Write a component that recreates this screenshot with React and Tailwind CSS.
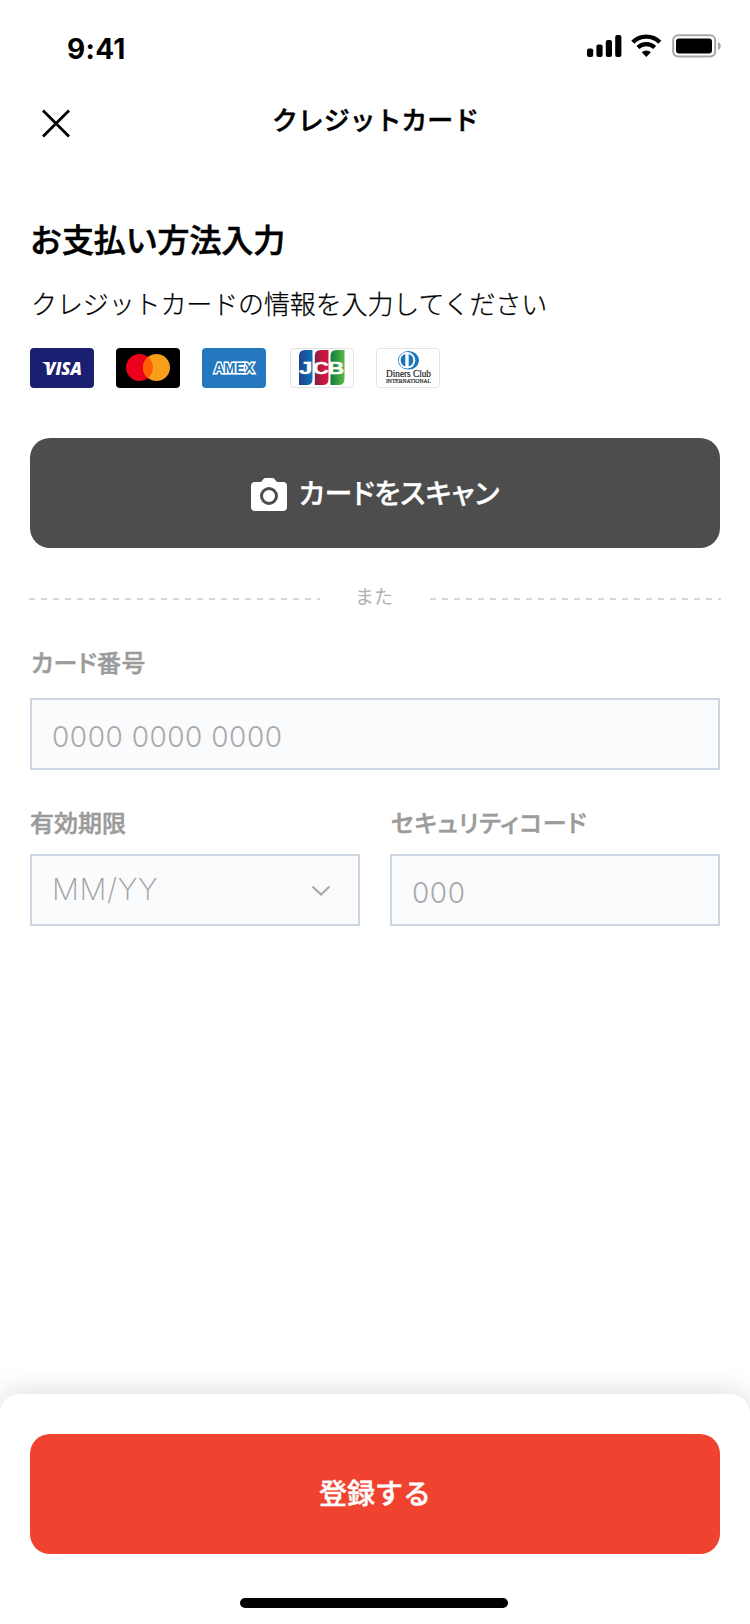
import { useState } from "react";

const labelClass =
  "text-[24px] leading-9 font-medium text-[#9b9b9b] [-webkit-text-stroke:0.5px] [font-feature-settings:'palt']";
const boxClass = "h-[72px] w-full border-2 border-[#cdd5e1] bg-[#fafbfd] flex items-center";
const inputClass =
  "w-full pt-[5px] bg-transparent outline-none font-['Inter',sans-serif] text-[28px] font-light tracking-[0.52px] text-[#a9a9a9] placeholder:text-[#a9a9a9] placeholder:opacity-100";

function StatusBar() {
  return (
    <div className="h-[88px] flex items-start justify-between pl-[67px] pr-[28px]">
      <span className="mt-[32px] font-['Inter',sans-serif] text-[28px] leading-[34px] font-bold tracking-[0.3px]">
        9:41
      </span>
      <div className="flex items-start pt-[34px]">
        <svg width="35" height="24" viewBox="0 0 35 24">
          <rect x="0" y="14.5" width="6.2" height="8.5" rx="2" />
          <rect x="9.4" y="10.5" width="6.2" height="12.5" rx="2" />
          <rect x="18.8" y="6" width="6.2" height="17" rx="2" />
          <rect x="28.2" y="1" width="6.2" height="22" rx="2" />
        </svg>
        <svg width="31" height="24" viewBox="0 0 31 24" fill="none" stroke="#000" className="ml-[9px]">
          <path d="M1.8 8.2a19.2 19.2 0 0 1 27 0" strokeWidth="4.4" />
          <path d="M6.9 13.5a12 12 0 0 1 16.8 0" strokeWidth="4.2" />
          <path d="M10.7 18.3a6.6 6.6 0 0 1 9.2 0L15.3 22.9Z" fill="#000" stroke="none" />
        </svg>
        <svg width="50" height="24" viewBox="0 0 50 24" className="ml-[10px]">
          <rect x="1.2" y="1.2" width="42" height="21.3" rx="5" fill="none" stroke="#a6a6a6" strokeWidth="2" />
          <rect x="4" y="4.5" width="36" height="15" rx="3" />
          <path d="M46 8c1.7.7 2.7 2.2 2.7 4s-1 3.3-2.7 4Z" fill="#a6a6a6" />
        </svg>
      </div>
    </div>
  );
}

function VisaCard() {
  return (
    <svg width="64" height="40" viewBox="0 0 64 40">
      <rect width="64" height="40" rx="4" fill="#1a1f71" />
      <path d="M12 14h6l2 3-2 3q-1.5-4-6-6Z" fill="#fff" />
      <text
        x="15"
        y="27"
        fontFamily="Open Sans, sans-serif"
        fontSize="18"
        fontWeight="800"
        fontStyle="italic"
        fill="#fff"
        textLength="37"
        lengthAdjust="spacingAndGlyphs"
      >
        VISA
      </text>
    </svg>
  );
}

function MasterCard() {
  return (
    <svg width="64" height="40" viewBox="0 0 64 40">
      <rect width="64" height="40" rx="4" />
      <circle cx="23.5" cy="19.5" r="13.5" fill="#eb001b" />
      <circle cx="40.5" cy="19.5" r="13.5" fill="#f79e1b" />
      <path d="M32 9a13.5 13.5 0 0 1 0 21a13.5 13.5 0 0 1 0-21Z" fill="#ff5f00" />
    </svg>
  );
}

function AmexCard() {
  return (
    <svg width="64" height="40" viewBox="0 0 64 40">
      <rect width="64" height="40" rx="4" fill="#2478bd" />
      <text
        x="12"
        y="24.8"
        fontFamily="Liberation Sans, sans-serif"
        fontSize="14"
        fontWeight="700"
        fill="#2478bd"
        stroke="#fff"
        strokeWidth="2.8"
        paintOrder="stroke"
        textLength="40"
        lengthAdjust="spacingAndGlyphs"
      >
        AMEX
      </text>
    </svg>
  );
}

function JcbCard() {
  return (
    <svg width="64" height="40" viewBox="0 0 64 40">
      <defs>
        <linearGradient id="jcb-blue">
          <stop offset="0" stopColor="#25408f" />
          <stop offset="1" stopColor="#0a72b8" />
        </linearGradient>
        <linearGradient id="jcb-red">
          <stop offset="0" stopColor="#7a2348" />
          <stop offset="0.6" stopColor="#c9163f" />
          <stop offset="1" stopColor="#cf1740" />
        </linearGradient>
        <linearGradient id="jcb-green">
          <stop offset="0" stopColor="#127a3e" />
          <stop offset="1" stopColor="#5bb947" />
        </linearGradient>
      </defs>
      <rect x="0.5" y="0.5" width="63" height="39" rx="3.5" fill="#fff" stroke="#e3e3e6" />
      <path d="M9 8q0-6 6-6h7.5v29q0 6-6 6H9Z" fill="url(#jcb-blue)" />
      <path d="M24.8 8q0-6 6-6h7.7v29q0 6-6 6h-7.7Z" fill="url(#jcb-red)" />
      <path d="M40.5 8q0-6 6-6h8v29q0 6-6 6h-8Z" fill="url(#jcb-green)" />
      <g fontFamily="Liberation Sans, sans-serif" fontSize="16" fontWeight="700" fill="#fff" stroke="#fff" strokeWidth="0.4">
        <text transform="translate(9 25.6) scale(1.5 1)">J</text>
        <text transform="translate(22.8 25.6) scale(1.4 1)">C</text>
        <text transform="translate(38 25.6) scale(1.4 1)">B</text>
      </g>
    </svg>
  );
}

function DinersCard() {
  return (
    <svg width="64" height="40" viewBox="0 0 64 40">
      <rect x="0.5" y="0.5" width="63" height="39" rx="3.5" fill="#fff" stroke="#e3e3e6" />
      <ellipse cx="32.5" cy="12.3" rx="10.5" ry="9.3" fill="#1b75bb" />
      <circle cx="31" cy="12.3" r="8.3" fill="#fff" />
      <path d="M29.3 6v12.6a6.6 6.6 0 0 1 0-12.6ZM32.7 6v12.6a6.6 6.6 0 0 0 0-12.6Z" fill="#1b75bb" />
      <g fontFamily="Liberation Serif, serif" fill="#222" stroke="#222" strokeWidth="0.2">
        <text x="10" y="28.8" fontSize="10" textLength="45" lengthAdjust="spacingAndGlyphs">
          Diners Club
        </text>
        <text x="10" y="34.8" fontSize="5.8" textLength="45" lengthAdjust="spacingAndGlyphs">
          INTERNATIONAL
        </text>
      </g>
    </svg>
  );
}

function DashedLine() {
  return (
    <svg width="291" height="2" className="shrink-0 mt-1">
      <path d="M0 1H291" stroke="#d8d8d8" strokeWidth="2" strokeDasharray="6 6" />
    </svg>
  );
}

export default function App() {
  const [cardNumber, setCardNumber] = useState("");
  const [code, setCode] = useState("");

  return (
    <div className="w-[750px] h-[1624px] bg-white text-black overflow-hidden flex flex-col font-['Noto_Sans_CJK_JP',sans-serif]">
      <StatusBar />

      {/* Header */}
      <header className="h-16 grid grid-cols-[1fr_auto_1fr] items-start">
        <button className="ml-[42px] mt-[21px] w-7">
          <svg width="28" height="29" viewBox="0 0 28 29" fill="none" stroke="#000" strokeWidth="2.8">
            <path d="M1 1.5 27 27.5M27 1.5 1 27.5" />
          </svg>
        </button>
        <h1 className="mt-[11px] pl-px text-[26px] leading-10 font-medium tracking-[-0.12px] [-webkit-text-stroke:0.5px]">
          クレジットカード
        </h1>
      </header>

      <main className="flex-1 px-[30px]">
        <h2 className="mt-[62px] text-[32px] leading-12 font-medium tracking-[-0.12px] [-webkit-text-stroke:0.6px]">
          お支払い方法入力
        </h2>
        <p className="mt-[21px] pl-px text-[26px] leading-10 font-light tracking-[-0.12px] [-webkit-text-stroke:0.25px]">
          クレジットカードの情報を入力してください
        </p>

        {/* Accepted brands */}
        <div className="mt-[25px] flex gap-[22px]">
          <VisaCard />
          <MasterCard />
          <AmexCard />
          <div className="ml-[2px]">
            <JcbCard />
          </div>
          <DinersCard />
        </div>

        <button className="mt-[50px] w-full h-[110px] rounded-[20px] bg-[#4d4d4d] text-white flex items-center justify-center">
          <svg width="36" height="34" viewBox="0 0 36 34" className="mr-3 mt-[3px]">
            <path
              d="M4 4h6l2.5-3q.8-1 2-1h7q1.2 0 2 1L26 4h6q4 0 4 4v21q0 4-4 4H4q-4 0-4-4V8q0-4 4-4Z"
              fill="#fff"
            />
            <circle cx="18" cy="18" r="7.5" fill="#fff" stroke="#4d4d4d" strokeWidth="3" />
          </svg>
          <span className="-mt-[2px] text-[28px] leading-10 font-medium [-webkit-text-stroke:0.3px] [font-feature-settings:'palt']">
            カードをスキャン
          </span>
        </button>

        {/* Divider */}
        <div className="mt-[34px] h-[30px] -mx-px flex items-center justify-between">
          <DashedLine />
          <span className="-mt-[2px] mr-[2px] text-[19px] leading-[30px] text-[#b0b0b0]">また</span>
          <DashedLine />
        </div>

        <label className="block mt-[32px]">
          <span className={`block pl-px tracking-[0.4px] ${labelClass}`}>カード番号</span>
          <span className={`mt-[18px] px-5 ${boxClass}`}>
            <input
              className={inputClass}
              placeholder="0000 0000 0000"
              value={cardNumber}
              onChange={(e) => setCardNumber(e.target.value)}
            />
          </span>
        </label>

        <div className="mt-[34px] grid grid-cols-2 gap-[30px]">
          <div>
            <div className={labelClass}>有効期限</div>
            <button className={`mt-[14px] pl-5 pr-[27px] justify-between ${boxClass}`}>
              <span className="-mt-px font-['Inter',sans-serif] text-[30px] font-extralight tracking-[0.6px] text-[#a0a0a0]">
                MM/YY
              </span>
              <svg width="20" height="12" viewBox="0 0 20 12" fill="none" stroke="#a8a8a8" strokeWidth="2.2" className="mt-[2px]">
                <path d="M1.5 1.5 10 9.5 18.5 1.5" />
              </svg>
            </button>
          </div>
          <label>
            <span className={`block pl-px tracking-[0.7px] ${labelClass}`}>セキュリティコード</span>
            <span className={`mt-[14px] px-5 ${boxClass}`}>
              <input
                className={inputClass}
                placeholder="000"
                value={code}
                onChange={(e) => setCode(e.target.value)}
              />
            </span>
          </label>
        </div>
      </main>

      {/* Bottom sheet */}
      <footer className="h-[230px] shrink-0 rounded-t-[20px] bg-white px-[30px] pt-10 flex flex-col items-center shadow-[0_0_30px_rgba(0,0,0,0.16)]">
        <button className="w-full h-[120px] pb-[4px] rounded-[20px] bg-[#ef432f] text-white text-[28px] font-medium [-webkit-text-stroke:0.4px]">
          登録する
        </button>
        <div className="mt-11 mr-[2px] w-[268px] h-[10px] rounded-full bg-black" />
      </footer>
    </div>
  );
}
